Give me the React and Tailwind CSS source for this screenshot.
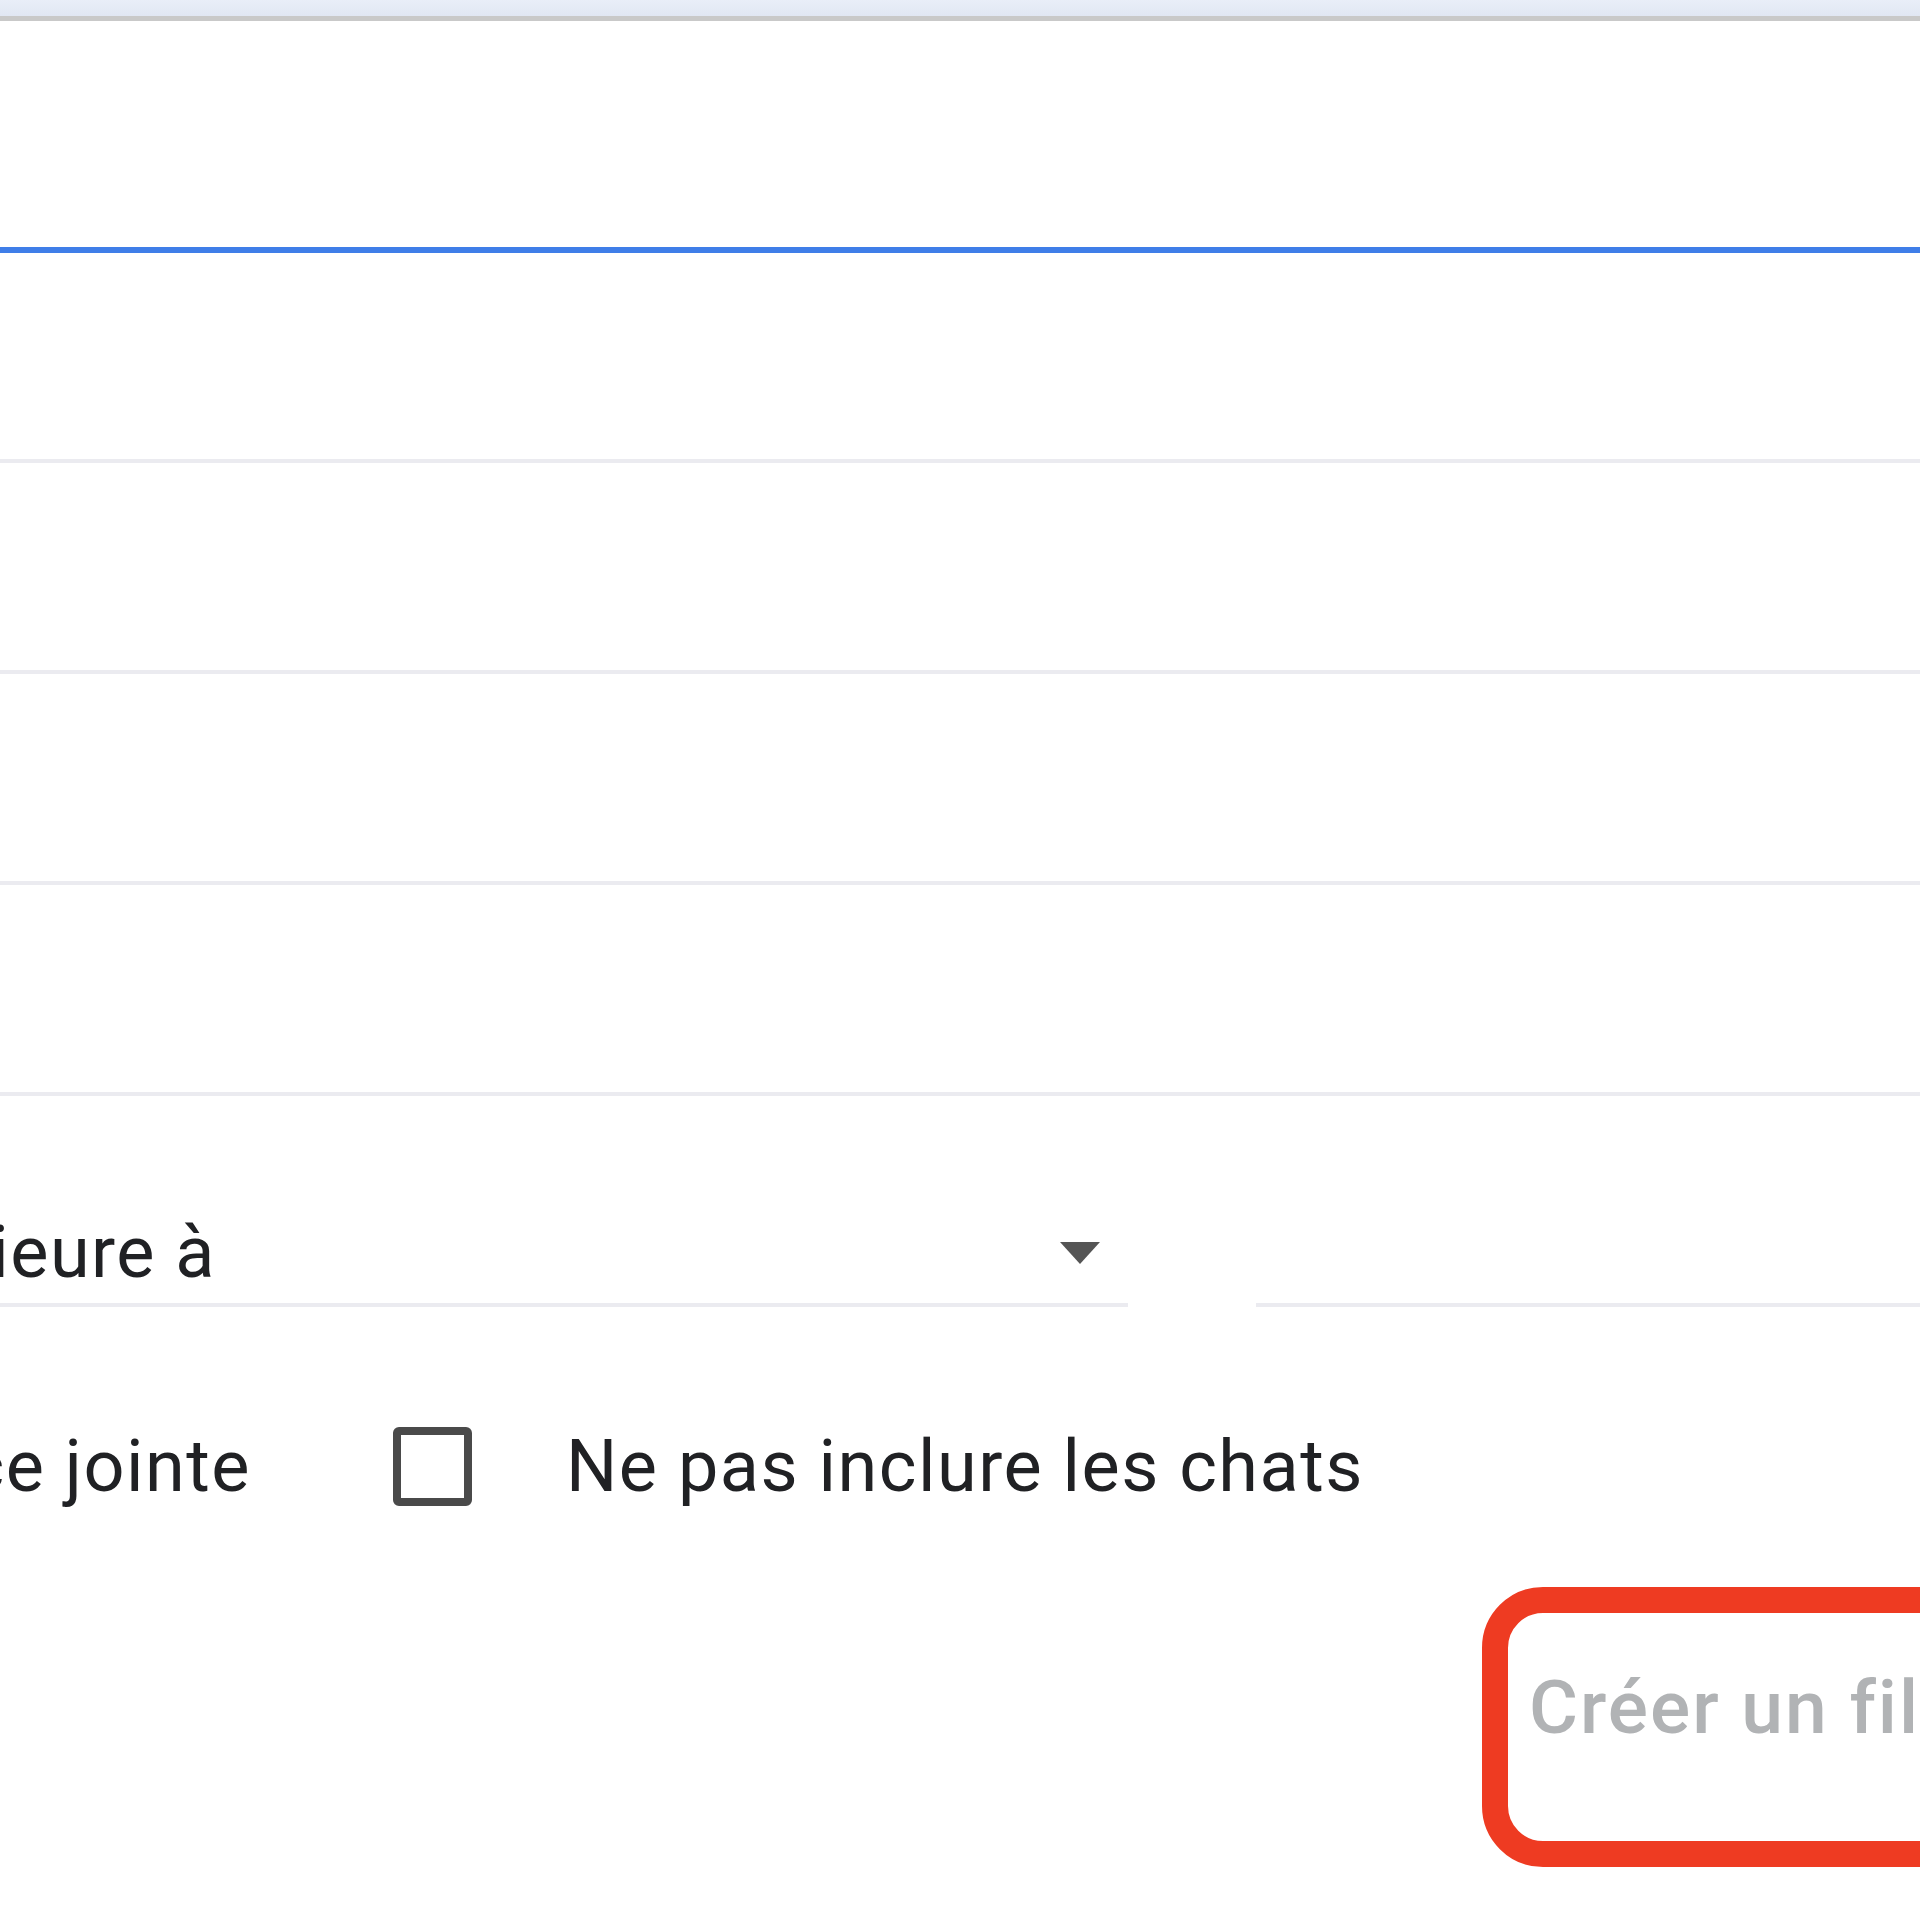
import React from 'react';

// Filtre de recherche Gmail (vue zoomée)
const Row = ({ first }) => (
  <div className={`${first ? 'h-[210px]' : 'h-[211px]'} border-b-4 border-[#ebebf0]`} />
);

const App = () => {
  return (
    <div
      className="w-[1920px] h-[1920px] overflow-hidden bg-white text-[#202124]"
      style={{ fontFamily: 'Roboto, "Liberation Sans", sans-serif' }}
    >
      {/* barre du haut */}
      <div className="h-[16px] bg-gradient-to-b from-[#e9eef8] to-[#e1e7f3]" />
      <div className="h-[5px] bg-[#c9c9c9]" />

      {/* champ actif */}
      <div className="h-[232px] border-b-[6px] border-[#3f7ee8]" />

      <Row first />
      <Row />
      <Row />
      <Row />

      {/* Taille */}
      <div className="h-[211px] flex items-end">
        <div className="w-[1128px] h-[104px] border-b-4 border-[#ebebf0] flex items-center justify-between pr-[26px]">
          <div className="w-[216px] flex justify-end whitespace-nowrap text-[72px] leading-none tracking-[1.5px]">
            supérieure à
          </div>
          <svg width="44" height="24" viewBox="0 0 44 24" className="text-[#555555]">
            <path d="M2 1 L42 1 L22 23 Z" fill="currentColor" />
          </svg>
        </div>
        <div className="ml-[128px] flex-1 h-[104px] border-b-4 border-[#ebebf0]" />
      </div>

      {/* cases à cocher */}
      <div className="mt-[120px] flex items-center">
        <div className="w-[251px] flex justify-end whitespace-nowrap text-[72px] leading-none tracking-[1.5px]">
          Contient une pièce jointe
        </div>
        <div className="ml-[142px] w-[79px] h-[79px] shrink-0 border-[8px] border-[#4a4a4a] rounded-[6px]" />
        <div className="ml-[94px] whitespace-nowrap text-[72px] leading-none tracking-[1.5px]">
          Ne pas inclure les chats
        </div>
      </div>

      {/* bouton */}
      <div className="mt-[81px] ml-[1482px] w-[700px] h-[280px] border-[26px] border-[#ee3b22] rounded-[61px] pl-[21px] pt-[57px]">
        <span className="whitespace-nowrap text-[75px] leading-none font-medium tracking-[2px] text-[#b1b3b5]">
          Créer un filtre
        </span>
      </div>
    </div>
  );
};

export default App;
